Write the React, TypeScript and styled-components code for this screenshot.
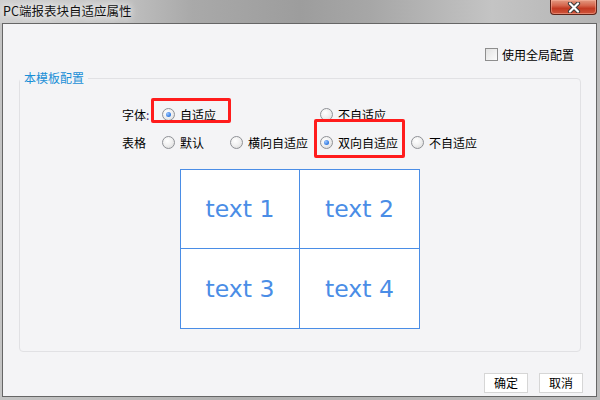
import React from "react";
import styled, { createGlobalStyle } from "styled-components";

const Global = createGlobalStyle`
  html, body { margin: 0; padding: 0; background: #b2b2b2; overflow: hidden; }
  body { font-family: "Noto Sans CJK SC", "Noto Sans", sans-serif; }
`;

const Frame = styled.div`
  width: 600px;
  height: 400px;
  display: flex;
  flex-direction: column;
  background: linear-gradient(90deg, #c4c4c4 0%, #b0b0b0 40%, #bcbcbc 100%);
  overflow: hidden;
`;

const TitleBar = styled.div`
  height: 23px;
  flex: none;
  display: flex;
  justify-content: space-between;
  align-items: flex-start;
  padding: 0 3px;
  background: linear-gradient(
    90deg,
    #cfcfcf 0%,
    #c6c6c6 18%,
    #a9a9a9 32%,
    #9d9d9d 50%,
    #a7a7a7 62%,
    #c4c4c4 82%,
    #b4b4b4 100%
  );
`;

const Title = styled.div`
  font: 12.5px/22px "Noto Sans CJK SC", sans-serif;
  color: #111;
  text-shadow: 0 0 6px #fff, 0 0 10px rgba(255, 255, 255, 0.9);
`;

const CloseButton = styled.div`
  width: 47px;
  height: 15px;
  box-sizing: border-box;
  border: 1px solid #5e2419;
  border-top: none;
  border-radius: 0 0 4px 4px;
  background: linear-gradient(#e39a82 0%, #d5654c 40%, #c23a22 60%, #cf553b 100%);
  box-shadow: inset 0 0 0 1px rgba(255, 190, 170, 0.45);
  display: flex;
  align-items: center;
  justify-content: center;
`;

const Body = styled.div`
  flex: 1;
  margin: 0 3px 3px 2px;
  border: 1px solid #666;
  background: #f4f4f6;
  display: flex;
  flex-direction: column;
  min-height: 0;
`;

const TopRow = styled.div`
  margin: 23px 22px 0 0;
  height: 14px;
  display: flex;
  justify-content: flex-end;
  align-items: center;
  gap: 4px;
  font-size: 12px;
  color: #000;
`;

const CheckBox = styled.span`
  width: 13px;
  height: 13px;
  box-sizing: border-box;
  border: 1px solid #8e8e8e;
  background: linear-gradient(135deg, #e2e2e2, #fbfbfb);
`;

const Group = styled.fieldset`
  margin: 10px 15px 0 16px;
  padding: 0;
  height: 281px;
  box-sizing: border-box;
  border: 1px solid #e1e1e4;
  border-radius: 4px;
  min-width: 0;
  display: flex;
  flex-direction: column;
`;

const Legend = styled.legend`
  padding: 0 4px;
  margin: 0;
  font-size: 12px;
  line-height: 14px;
  color: #1a8fd6;
`;

const OptionGrid = styled.div`
  display: grid;
  grid-template-columns: 40px 68px 90px 91px max-content;
  grid-template-rows: 20px 20px;
  row-gap: 8px;
  align-items: center;
  padding: 19px 0 0 102px;
  font-size: 12px;
  color: #000;
`;

const RowLabel = styled.span<{ $row: number }>`
  grid-row: ${(p) => p.$row};
  grid-column: 1;
  white-space: nowrap;
`;

const Colon = styled.span`
  color: #4b2a78;
`;

const Option = styled.label<{ $row: number; $col: number; $box?: string }>`
  grid-row: ${(p) => p.$row};
  grid-column: ${(p) => p.$col};
  position: relative;
  display: inline-flex;
  align-items: center;
  gap: 5px;
  white-space: nowrap;
  justify-self: start;
  height: 20px;
  ${(p) =>
    p.$box
      ? `&::after {
          content: "";
          position: absolute;
          inset: ${p.$box};
          border: 3px solid #ff1c1c;
          border-radius: 2px;
          pointer-events: none;
        }`
      : ""}
`;

const Radio = styled.span<{ $checked?: boolean }>`
  width: 13px;
  height: 13px;
  box-sizing: border-box;
  border-radius: 50%;
  border: 1px solid #8f9196;
  background: radial-gradient(circle at 40% 35%, #ffffff 0%, #f1f1f1 45%, #d6d6d6 100%);
  display: inline-flex;
  align-items: center;
  justify-content: center;
  flex: none;
  &::after {
    content: "";
    width: 5px;
    height: 5px;
    border-radius: 50%;
    background: ${(p) =>
      p.$checked ? "radial-gradient(circle at 35% 35%, #9cc6ff, #2f78e0 70%)" : "transparent"};
  }
`;

const Table = styled.div`
  align-self: center;
  margin-top: 17px;
  display: grid;
  grid-template-columns: 119px 120px;
  grid-template-rows: 79px 80px;
  border-top: 1px solid #4a8de6;
  border-left: 1px solid #4a8de6;
  background: #fff;
`;

const Cell = styled.div`
  border-right: 1px solid #4a8de6;
  border-bottom: 1px solid #4a8de6;
  display: flex;
  align-items: center;
  justify-content: center;
  font-family: "DejaVu Sans", Verdana, sans-serif;
  font-size: 23.5px;
  color: #4a8de6;
`;

const Footer = styled.div`
  margin: auto 13px 3px 0;
  display: flex;
  justify-content: flex-end;
  gap: 11px;
`;

const Button = styled.button`
  width: 44px;
  height: 20px;
  padding: 0;
  border: 1px solid #d6d6d6;
  background: #fff;
  font-family: "Noto Sans CJK SC", sans-serif;
  font-size: 12px;
  line-height: 18px;
  color: #000;
`;

const CloseIcon = () => (
  <svg width="16" height="11" viewBox="0 0 16 11">
    <path d="M4 1.5 L12 9.5 M12 1.5 L4 9.5" stroke="#3b3b3b" strokeWidth="4.2" strokeLinecap="round" />
    <path d="M4 1.5 L12 9.5 M12 1.5 L4 9.5" stroke="#ffffff" strokeWidth="2.2" strokeLinecap="round" />
  </svg>
);

export default function App() {
  return (
    <>
      <Global />
      <Frame>
        <TitleBar>
          <Title>PC端报表块自适应属性</Title>
          <CloseButton>
            <CloseIcon />
          </CloseButton>
        </TitleBar>
        <Body>
          <TopRow>
            <CheckBox />
            <span>使用全局配置</span>
          </TopRow>
          <Group>
            <Legend>本模板配置</Legend>
            <OptionGrid>
              <RowLabel $row={1}>
                字体<Colon>:</Colon>
              </RowLabel>
              <Option $row={1} $col={2} $box="-6px -15px 1px -11px">
                <Radio $checked />
                自适应
              </Option>
              <Option $row={1} $col={4}>
                <Radio />
                不自适应
              </Option>
              <RowLabel $row={2}>表格</RowLabel>
              <Option $row={2} $col={2}>
                <Radio />
                默认
              </Option>
              <Option $row={2} $col={3}>
                <Radio />
                横向自适应
              </Option>
              <Option $row={2} $col={4} $box="-13px -7px -6px -6px">
                <Radio $checked />
                双向自适应
              </Option>
              <Option $row={2} $col={5}>
                <Radio />
                不自适应
              </Option>
            </OptionGrid>
            <Table>
              <Cell>text 1</Cell>
              <Cell>text 2</Cell>
              <Cell>text 3</Cell>
              <Cell>text 4</Cell>
            </Table>
          </Group>
          <Footer>
            <Button>确定</Button>
            <Button>取消</Button>
          </Footer>
        </Body>
      </Frame>
    </>
  );
}
